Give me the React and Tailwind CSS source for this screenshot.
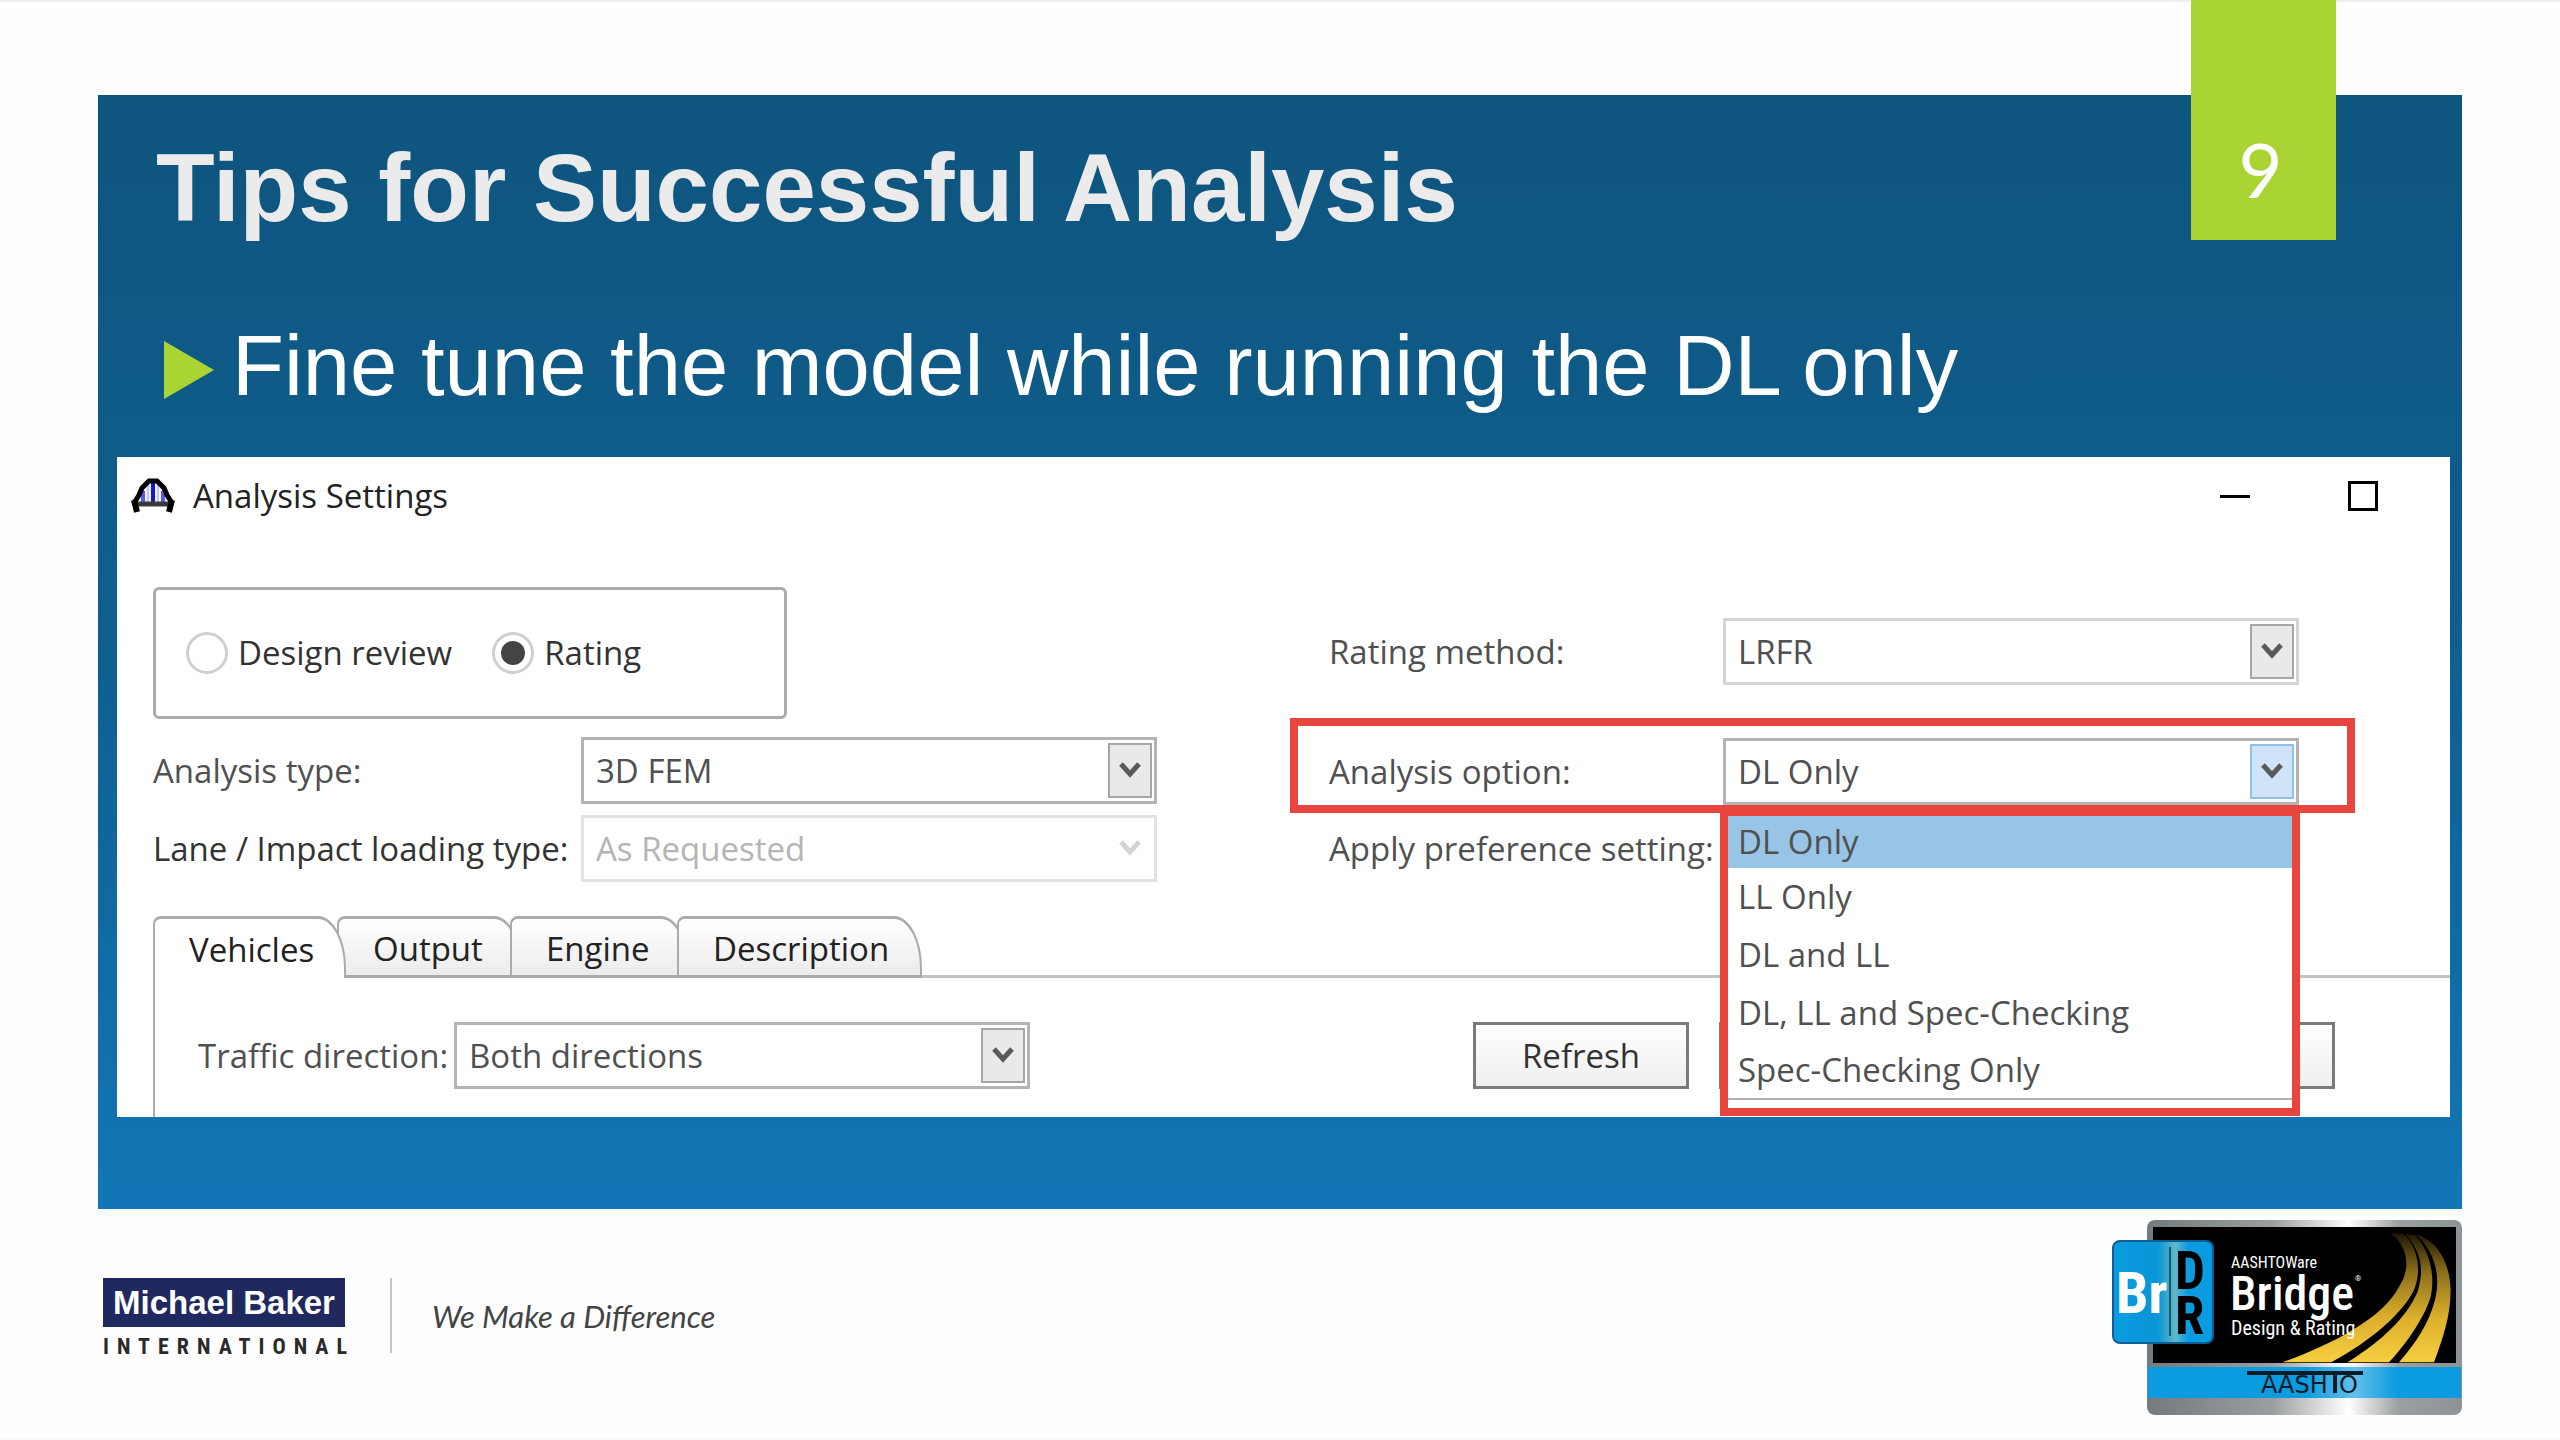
import React, { useState } from "react";

const analysisOptions = [
  "DL Only",
  "LL Only",
  "DL and LL",
  "DL, LL and Spec-Checking",
  "Spec-Checking Only",
];

const tabs = [
  { name: "Vehicles", style: "w-[193px] pl-[34px]" },
  { name: "Output", style: "w-[185px] -ml-[9px] pl-[34px]" },
  { name: "Engine", style: "w-[179px] -ml-3 pl-[34px]" },
  { name: "Description", style: "w-[245px] -ml-3 pl-[34px]" },
];

const BridgeIcon = () => (
  <svg className="h-[38px] w-11" viewBox="0 0 44 38" fill="none">
    <path d="M9 25 L9 16 L18 5 L26 5 L35 16 L35 25 Z" fill="#f4f4ff" />
    <path d="M12 14v12M32 14v12" stroke="#5a5af0" strokeWidth="4" />
    <path d="M17 8v18M27 8v18" stroke="#c4c4fb" strokeWidth="2" />
    <path d="M22 4v24" stroke="#1414e0" strokeWidth="4" />
    <path d="M3 26 L8 18 L11 11 L18 4 L26 4 L33 11 L36 18 L41 26" stroke="#000" strokeWidth="5" />
    <path d="M3 27H41" stroke="#3a3a3a" strokeWidth="5" />
    <path d="M3 23 L6 35 M41 23 L38 35" stroke="#000" strokeWidth="6" />
  </svg>
);

const Chevron = () => (
  <svg className="h-5 w-6" viewBox="0 0 24 20" fill="none">
    <path d="M3 3 L12 13 L21 3" stroke="currentColor" strokeWidth="5" />
  </svg>
);

const SelectBox = ({ id, options, value, onChange, disabled, active, light, children }) => {
  return (
    <div className="relative h-[67px] w-[576px]">
      <select
        id={id}
        value={value}
        disabled={disabled}
        onChange={(e) => onChange && onChange(e.target.value)}
        className={`h-full w-full appearance-none border-[3px] bg-white pl-3 pr-14 text-[33px] opacity-100 ${
          disabled
            ? "border-[#e2e2e2] text-[#b4b4b4]"
            : light
            ? "border-[#d4d4d4] text-[#505050]"
            : "border-[#b4b4b4] text-[#505050]"
        }`}
      >
        {options.map((item) => (
          <option key={item}>{item}</option>
        ))}
      </select>
      <div
        className={`pointer-events-none absolute top-[6px] right-[5px] flex h-[55px] w-[44px] items-center justify-center ${
          disabled
            ? "text-[#d4d4d4]"
            : active
            ? "border-2 border-[#8fc0ea] bg-[#cfe4f8] text-[#5a5a5a]"
            : "border-2 border-[#a6a6a6] bg-[#e9e9e9] text-[#5a5a5a]"
        }`}
      >
        <Chevron />
      </div>
      {children}
    </div>
  );
};

const BridgeLogo = () => (
  <svg className="h-[196px] w-[350px]" viewBox="0 0 350 196">
    <defs>
      <linearGradient id="metal" x1="0" x2="1" y1="0" y2="0">
        <stop offset="0" stopColor="#747a7d" />
        <stop offset="0.4" stopColor="#9b9fa1" />
        <stop offset="0.64" stopColor="#ffffff" />
        <stop offset="0.8" stopColor="#9b9fa1" />
        <stop offset="1" stopColor="#8d9396" />
      </linearGradient>
      <linearGradient id="cyan" x1="0" x2="1" y1="0" y2="0">
        <stop offset="0" stopColor="#0a9be0" />
        <stop offset="0.5" stopColor="#0a9be0" />
        <stop offset="0.66" stopColor="#62c0ec" />
        <stop offset="0.8" stopColor="#0a9be0" />
        <stop offset="1" stopColor="#0a9be0" />
      </linearGradient>
      <linearGradient id="brbox" x1="0" x2="1" y1="0" y2="0">
        <stop offset="0" stopColor="#0a9be0" />
        <stop offset="0.45" stopColor="#0a96d8" />
        <stop offset="0.62" stopColor="#62b8c8" />
        <stop offset="0.75" stopColor="#0a9be0" />
        <stop offset="1" stopColor="#0a9be0" />
      </linearGradient>
      <linearGradient id="road" gradientUnits="userSpaceOnUse" x1="0" x2="0" y1="130" y2="517">
        <stop offset="0" stopColor="#1c1603" />
        <stop offset="0.3" stopColor="#8c6f1c" />
        <stop offset="0.65" stopColor="#dcae2c" />
        <stop offset="1" stopColor="#f6cf40" />
      </linearGradient>
    </defs>
    <rect x="35" y="0" width="315" height="195" rx="8" fill="url(#metal)" />
    <rect x="41" y="7" width="303" height="136" fill="#000" />
    <g transform="scale(0.3333) translate(-99 -90)" fill="url(#road)">
      <path d="M935 130 C990 170 995 240 960 290 C910 390 740 470 610 517 L757 517 C880 450 970 370 1005 300 C1030 240 1015 170 975 132 Z" />
      <path d="M980 132 C1030 190 1035 240 1016 305 C975 400 880 470 805 517 L930 517 C1000 440 1040 370 1055 320 C1070 250 1050 180 1008 135 Z" />
      <path d="M1013 135 C1062 180 1088 250 1068 330 C1050 400 1010 460 960 517 L1065 517 C1090 450 1115 380 1115 300 C1112 220 1080 160 1020 135 Z" />
    </g>
    <rect x="36" y="147" width="313" height="31" fill="url(#cyan)" />
    <path d="M135 153H251M223 153V173" stroke="#0b1c28" strokeWidth="4" />
    <g fontFamily="DejaVu Sans" fontSize="24" fill="#0b1c28">
      <text x="149" y="173">AASH</text>
      <text x="227" y="173">O</text>
    </g>
    <rect x="1" y="21" width="100" height="102" rx="7" fill="url(#brbox)" stroke="#0d5f93" strokeWidth="2" />
    <path d="M58 27V116" stroke="#1c5668" strokeWidth="2" />
    <g fontFamily="Roboto Condensed, Roboto" fontWeight="700">
      <text x="4" y="93" fontSize="58" fill="#fff">Br</text>
      <text x="63" y="69" fontSize="53" fill="#000">D</text>
      <text x="63" y="114" fontSize="53" fill="#000">R</text>
    </g>
    <g fontFamily="Roboto Condensed, Roboto" fill="#fff">
      <text x="119" y="48" fontSize="16">AASHTOWare</text>
      <text x="118" y="90" fontSize="48" fontWeight="500">Bridge</text>
      <text x="243" y="61" fontSize="8">®</text>
      <text x="119" y="115" fontSize="20">Design &amp; Rating</text>
    </g>
  </svg>
);

const App = () => {
  const [mode, setMode] = useState("Rating");
  const [option, setOption] = useState("DL Only");
  const [activeTab, setActiveTab] = useState("Vehicles");

  return (
    <div className="relative flex min-h-screen w-full flex-col border-t-2 border-b-2 border-t-[#efefef] border-b-[#f7f7f7] bg-[#fefefe] pt-[93px] font-['Liberation_Sans',sans-serif]">
      <main className="mr-[98px] ml-[98px] bg-linear-to-b from-[#0e557e] via-[#0f5f90] to-[#1276b6] pb-[92px]">
        <h1 className="pt-[38px] pl-[58px] text-[96px] leading-[110px] font-bold text-[#ebebeb]">
          Tips for Successful Analysis
        </h1>
        <div className="flex h-[214px] items-center gap-[18px] pt-8 pl-[66px]">
          <svg className="mt-2 h-[58px] w-[50px]" viewBox="0 0 50 58">
            <path d="M0 0 L50 29 L0 58 Z" fill="#aad433" />
          </svg>
          <p className="text-[85px] leading-[96px] text-white">
            Fine tune the model while running the DL only
          </p>
        </div>

        <section className="mr-3 ml-[19px] bg-white font-['Open_Sans','Noto_Sans',sans-serif] text-[33px] leading-[44px] text-[#505050]">
          <header className="flex h-[78px] items-center pr-[67px] pl-[14px] text-[#222]">
            <BridgeIcon />
            <h2 className="ml-[18px]">Analysis Settings</h2>
            <button className="ml-auto flex h-10 w-10 items-center justify-center" aria-label="Minimize">
              <span className="h-[3px] w-[30px] bg-black"></span>
            </button>
            <button className="ml-[88px] flex h-10 w-10 items-center justify-center" aria-label="Maximize">
              <span className="h-[30px] w-[30px] border-[3px] border-black"></span>
            </button>
          </header>

          <div className="grid grid-cols-2 pl-[13px]">
            <div className="pt-[52px] pl-[23px]">
              <div className="flex h-[132px] w-[634px] items-center rounded-md border-[3px] border-[#ababab] pl-[30px] text-[#333]">
                {["Design review", "Rating"].map((item) => (
                  <label key={item} className="mr-10 flex items-center gap-[10px]">
                    <input
                      type="radio"
                      name="mode"
                      checked={mode === item}
                      onChange={() => setMode(item)}
                      className="h-[42px] w-[42px] appearance-none rounded-full border-[3px] border-[#cfcfcf] bg-white p-[6px] before:block before:h-full before:w-full before:rounded-full checked:before:bg-[#444]"
                    />
                    {item}
                  </label>
                ))}
              </div>
              <div className="mt-[18px] flex items-center">
                <label htmlFor="analysisType" className="w-[428px]">
                  Analysis type:
                </label>
                <SelectBox id="analysisType" options={["3D FEM"]} />
              </div>
              <div className="mt-[11px] flex items-center">
                <label htmlFor="laneType" className="w-[428px] whitespace-nowrap text-[#333]">
                  Lane / Impact loading type:
                </label>
                <SelectBox id="laneType" options={["As Requested"]} disabled />
              </div>
            </div>

            <div className="pt-[83px]">
              <div className="flex items-center pl-[39px]">
                <label htmlFor="ratingMethod" className="w-[394px]">
                  Rating method:
                </label>
                <SelectBox id="ratingMethod" options={["LRFR"]} light />
              </div>
              <div className="mt-[33px] mr-[95px] flex items-center border-8 border-[#e8453f] pt-3 pl-[31px]">
                <label htmlFor="analysisOption" className="w-[394px]">
                  Analysis option:
                </label>
                <SelectBox
                  id="analysisOption"
                  options={analysisOptions}
                  value={option}
                  onChange={setOption}
                  active
                >
                  <ul
                    role="listbox"
                    aria-label="Analysis option"
                    className="absolute top-[70px] -left-[3px] z-20 w-[580px] border-8 border-[#e8453f] bg-white pb-2"
                  >
                    {analysisOptions.map((item) => (
                      <li
                        key={item}
                        role="option"
                        aria-selected={option === item}
                        onClick={() => setOption(item)}
                        className={`flex h-[58px] cursor-pointer items-center pl-[10px] first:h-[52px] last:border-b-2 last:border-[#b0b0b0] ${
                          option === item ? "bg-[#98c5e5]" : "bg-white"
                        }`}
                      >
                        {item}
                      </li>
                    ))}
                  </ul>
                </SelectBox>
              </div>
              <p className="mt-[14px] pl-[39px]">Apply preference setting:</p>
            </div>
          </div>

          <div className="mt-[34px] flex pl-9" role="tablist">
            {tabs.map((tab) => (
              <button
                key={tab.name}
                role="tab"
                aria-selected={activeTab === tab.name}
                onClick={() => setActiveTab(tab.name)}
                className={`relative h-[62px] rounded-tl-lg rounded-tr-[28px_52px] border-2 border-t-[3px] border-[#ababab] pt-[3px] text-left text-[#222] ${tab.style} ${
                  activeTab === tab.name
                    ? "z-10 border-b-0 bg-white"
                    : "border-b-[3px] bg-linear-to-b from-white to-[#ececec]"
                }`}
              >
                {tab.name}
              </button>
            ))}
            <div className="grow border-b-[3px] border-[#c2c2c2]"></div>
          </div>
          <div className="ml-9 flex h-[139px] items-start border-l-2 border-[#ababab] pt-11 pr-[115px] pl-[43px]">
            <div className="flex items-center">
              <label htmlFor="traffic" className="w-[256px] whitespace-nowrap">
                Traffic direction:
              </label>
              <SelectBox id="traffic" options={["Both directions"]} />
            </div>
            <button className="ml-auto h-[67px] w-[216px] border-[3px] border-[#7a7a7a] bg-linear-to-b from-white to-[#efefef] text-[#333]">
              Refresh
            </button>
            <button
              aria-label="Advanced"
              className="ml-[30px] h-[67px] w-[616px] border-[3px] border-[#7a7a7a] bg-linear-to-b from-white to-[#efefef]"
            ></button>
          </div>
        </section>
      </main>

      <div className="absolute -top-[2px] right-[224px] flex h-[240px] w-[145px] justify-center bg-[#aad433] pt-[123px] pr-[6px] font-['Lato',sans-serif] text-[76px] leading-[92px] text-white">
        9
      </div>

      <footer className="flex grow items-start justify-between px-[98px] pt-[11px]">
        <div className="flex pt-[58px] pl-[5px]">
          <div className="w-[242px]">
            <div className="flex h-[49px] items-center justify-center bg-[#1f2960] text-[33px] font-bold whitespace-nowrap text-white">
              Michael Baker
            </div>
            <div className="mt-2 font-['Roboto_Condensed','Roboto',sans-serif] text-[22px] leading-[24px] font-bold tracking-[8px] whitespace-nowrap text-[#2a2a2a]">
              INTERNATIONAL
            </div>
          </div>
          <div className="ml-[45px] h-[75px] w-[2px] bg-[#c4c4c4]"></div>
          <p className="ml-10 pt-4 font-['Lato',sans-serif] text-[31px] leading-[44px] text-[#444] italic">
            We Make a Difference
          </p>
        </div>
        <BridgeLogo />
      </footer>
    </div>
  );
};

export default App;
